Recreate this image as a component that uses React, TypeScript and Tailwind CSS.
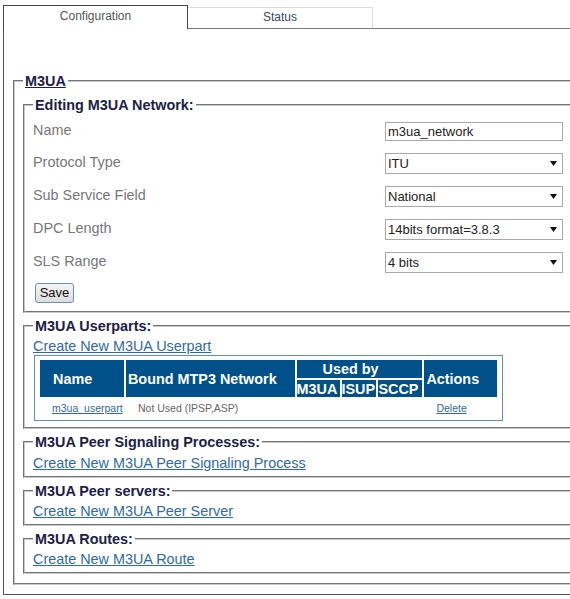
import React from "react";

const fs =
  "border-2 [border-style:groove] border-[#c8c8c8] min-w-0 m-0 pl-2 pr-2 text-[14px] leading-4";
const legendCls =
  "px-0.5 text-[14.4px] leading-4 font-bold text-[#1c2148]";
const linkCls = "block w-fit text-[14.4px] leading-4 text-[#2f6aa8] underline";

function Arrow() {
  return (
    <svg
      className="pointer-events-none absolute right-[6px] top-[8px]"
      width="7"
      height="5"
      viewBox="0 0 7 5"
    >
      <path d="M0 0 H7 L3.5 5 Z" fill="#111" />
    </svg>
  );
}

function Sel({ value }: { value: string }) {
  return (
    <div className="relative flex w-[178px]">
      <select
        defaultValue={value}
        className="block appearance-none w-[178px] h-[21px] border border-[#a9a9a9] bg-white pl-[2px] text-[13px] text-[#222] outline-none"
      >
        <option>{value}</option>
      </select>
      <Arrow />
    </div>
  );
}

export default function App() {
  const rows: { label: string; h: string; el: React.ReactNode }[] = [
    {
      label: "Name",
      h: "h-[31px]",
      el: (
        <input
          defaultValue="m3ua_network"
          className="block w-[178px] h-[19px] border border-[#a9a9a9] px-[2px] text-[13px] text-[#222] outline-none"
        />
      ),
    },
    { label: "Protocol Type", h: "h-[33px]", el: <Sel value="ITU" /> },
    { label: "Sub Service Field", h: "h-[33px]", el: <Sel value="National" /> },
    {
      label: "DPC Length",
      h: "h-[33px]",
      el: <Sel value="14bits format=3.8.3" />,
    },
    { label: "SLS Range", h: "h-[33px]", el: <Sel value="4 bits" /> },
  ];

  const th =
    "bg-[#00508a] text-white text-[14.4px] leading-4 font-bold p-0 text-left whitespace-nowrap";

  return (
    <div className="w-[570px] h-[599px] overflow-hidden bg-white font-['Liberation_Sans',Arial,sans-serif]">
      <div className="ml-[3px] pt-[5px] w-[600px]">
        <div className="flex h-[24px]">
          <div className="w-[185px] border-t border-l border-r border-[#444] text-center text-[12px] leading-[14px] text-[#555] pt-[3px]">
            Configuration
          </div>
          <div className="w-[185px] mt-[2px] border-t border-r border-[#dcdcdc] border-b border-b-[#777] text-center text-[12px] leading-[14px] text-[#3b4766] pt-[2px]">
            Status
          </div>
          <div className="flex-1 border-b border-[#777]" />
        </div>
        <div className="border-l border-b border-r border-[#555] px-[9px] pt-[44px] pb-[9px]">
          <fieldset className={`${fs} pt-2 pb-[9px]`}>
            <legend className={legendCls}>
              <span className="underline">M3UA</span>
            </legend>

            <fieldset className={`${fs} pt-[3px] pb-[8px]`}>
              <legend className={legendCls}>Editing M3UA Network:</legend>
              <div className="flex flex-col">
                {rows.map((r) => (
                  <div
                    key={r.label}
                    className={`grid grid-cols-[352px_178px] ${r.h} items-center`}
                  >
                    <span className="text-[14.4px] leading-4 text-[#777] -mt-[3px]">
                      {r.label}
                    </span>
                    {r.el}
                  </div>
                ))}
              </div>
              <button className="block mt-[4px] ml-[2px] w-[39px] h-[20px] border border-[#6f8db3] rounded-[3px] bg-gradient-to-b from-[#f4f4f4] to-[#dedede] text-[13px] leading-4 text-[#111]">
                Save
              </button>
            </fieldset>

            <fieldset className={`${fs} mt-[5px] pt-1 pb-[6px]`}>
              <legend className={legendCls}>M3UA Userparts:</legend>
              <a href="#" className={linkCls}>
                Create New M3UA Userpart
              </a>
              <div className="mt-px ml-px w-[469px] border border-[#5d8fc0] px-[3px] py-[2px]">
                <table className="border-separate border-spacing-[2px] table-fixed">
                  <colgroup>
                    <col className="w-[84px]" />
                    <col className="w-[169px]" />
                    <col className="w-[43px]" />
                    <col className="w-[35px]" />
                    <col className="w-[44px]" />
                    <col className="w-[73px]" />
                  </colgroup>
                  <thead>
                    <tr className="h-[18px]">
                      <th rowSpan={2} className={`${th} pl-[13px]`}>
                        Name
                      </th>
                      <th rowSpan={2} className={`${th} pl-[2px]`}>
                        Bound MTP3 Network
                      </th>
                      <th colSpan={3} className={`${th} pl-[26px]`}>
                        Used by
                      </th>
                      <th rowSpan={2} className={`${th} pl-[2px]`}>
                        Actions
                      </th>
                    </tr>
                    <tr className="h-[17px]">
                      <th className={`${th} pl-0`}>M3UA</th>
                      <th className={`${th} pl-0`}>ISUP</th>
                      <th className={`${th} pl-0`}>SCCP</th>
                    </tr>
                  </thead>
                  <tbody>
                    <tr className="h-[17px]">
                      <td className="p-0 pl-[12px] text-[10.5px] leading-4">
                        <a href="#" className="text-[#2f6aa8] underline">
                          m3ua_userpart
                        </a>
                      </td>
                      <td className="p-0 pl-[12px] text-[10.5px] leading-4 text-[#666] whitespace-nowrap">
                        Not Used (IPSP,ASP)
                      </td>
                      <td className="p-0" />
                      <td className="p-0" />
                      <td className="p-0" />
                      <td className="p-0 pl-[12px] text-[10.5px] leading-4">
                        <a href="#" className="text-[#2f6aa8] underline">
                          Delete
                        </a>
                      </td>
                    </tr>
                  </tbody>
                </table>
              </div>
            </fieldset>

            <fieldset className={`${fs} mt-[5px] pt-[5px] pb-[5px]`}>
              <legend className={legendCls}>
                M3UA Peer Signaling Processes:
              </legend>
              <a href="#" className={linkCls}>
                Create New M3UA Peer Signaling Process
              </a>
            </fieldset>

            <fieldset className={`${fs} mt-[5px] pt-1 pb-[5px]`}>
              <legend className={legendCls}>M3UA Peer servers:</legend>
              <a href="#" className={linkCls}>
                Create New M3UA Peer Server
              </a>
            </fieldset>

            <fieldset className={`${fs} mt-[5px] pt-1 pb-[5px]`}>
              <legend className={legendCls}>M3UA Routes:</legend>
              <a href="#" className={linkCls}>
                Create New M3UA Route
              </a>
            </fieldset>
          </fieldset>
        </div>
      </div>
    </div>
  );
}
